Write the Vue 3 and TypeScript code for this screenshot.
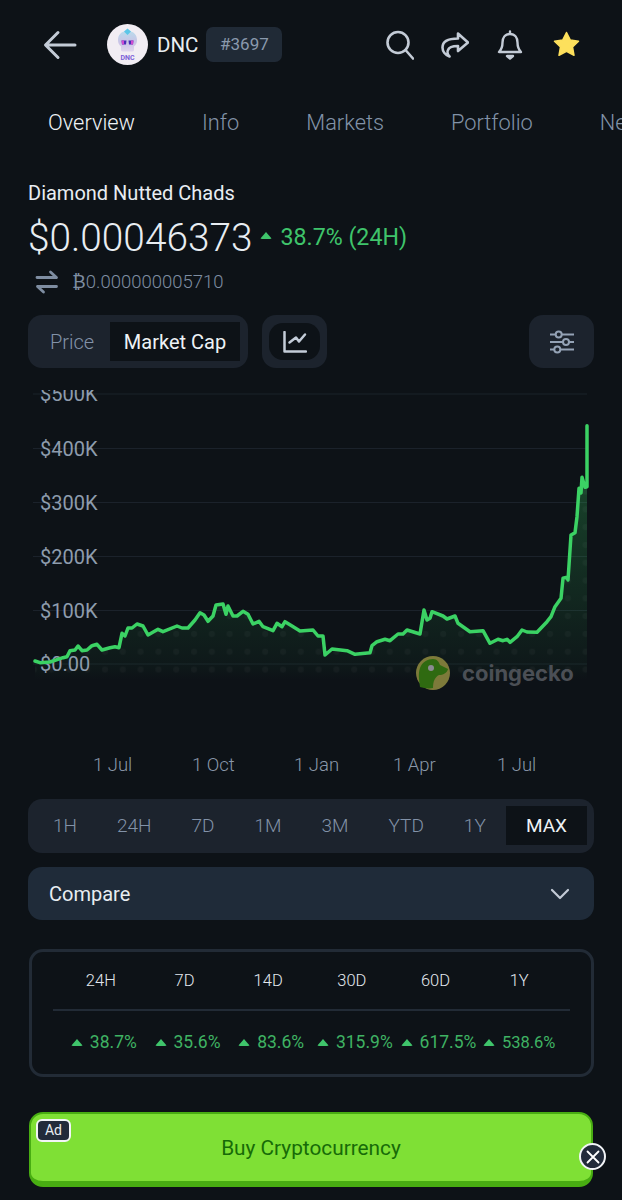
<template>
  <div class="page">
    <header class="topbar">
      <svg class="back" width="34" height="30" viewBox="0 0 34 30" fill="none">
        <path d="M32 15H3M15 2.500 2.500 15 15 27.500" stroke="#c3cbd6" stroke-width="3" stroke-linecap="round" stroke-linejoin="round" />
      </svg>
      <svg class="coin-logo" width="41" height="41" viewBox="0 0 41 41">
        <defs>
          <linearGradient id="skull" x1="0" y1="0" x2="0" y2="1">
            <stop offset="0" stop-color="#b9dcec" />
            <stop offset="0.55" stop-color="#c9c3e6" />
            <stop offset="1" stop-color="#e0d6ee" />
          </linearGradient>
        </defs>
        <circle cx="20.500" cy="20.500" r="20.500" fill="#f1edf3" />
        <path d="M20.500 7c6.500 0 9.500 4 9.500 9 0 3-1 5-3 6.500V26c0 1-1 1.500-2 1.500h-9c-1 0-2-.5-2-1.500v-3.500C12 21 11 19 11 16c0-5 3-9 9.500-9Z" fill="url(#skull)" />
        <path d="M14.500 16.500h5l-.5 4h-4ZM21.500 16.500h5l-.5 4h-4Z" fill="#4b2fb8" />
        <path d="M14.500 16.500h2.500v4h-2ZM24 16.500h2.500l-.5 4h-2Z" fill="#d04bd0" />
        <path d="M20.500 4.500 24 7.500 20.500 11 17 7.500Z" fill="#5cc6e8" />
        <text x="20.500" y="35.500" text-anchor="middle" class="logo-text">DNC</text>
      </svg>
      <span class="symbol">DNC</span>
      <span class="rank">#3697</span>
      <div class="actions">
        <svg width="28" height="30" viewBox="0 0 28 30" fill="none" stroke="#c3cbd6" stroke-width="2.600" stroke-linecap="round">
          <circle cx="12" cy="12.500" r="10.500" />
          <path d="M19.500 20 27 28.500" />
        </svg>
        <svg width="28" height="28" viewBox="0 0 28 28" fill="none" stroke="#c3cbd6" stroke-width="2.600" stroke-linejoin="round" stroke-linecap="round">
          <path d="M17 2.500 27 11.500 17 20v-5c-5 0-9 1-10 4-1 2 0 5 1.500 6.500C4 24 1.500 20 1.500 16.500 1.500 10 8 7.500 17 7.500Z" />
        </svg>
        <svg width="28" height="30" viewBox="0 0 28 30" fill="none" stroke="#c3cbd6" stroke-width="2.400" stroke-linejoin="round" stroke-linecap="round">
          <path d="M14 1.500v2.500M14 4c-5 0-7.500 4-7.500 8.500 0 4.500-1 7-3.500 9.500h22c-2.500-2.500-3.500-5-3.500-9.500C21.500 8 19 4 14 4Z" />
          <path d="M11 26h6l-3 2.500Z" fill="#c3cbd6" />
        </svg>
        <svg class="star" width="27" height="27" viewBox="0 0 27 27">
          <path d="M13.500 1.500 17.300 9l8.200 1.200-6 5.800 1.500 8.300-7.500-4-7.500 4L7.500 16l-6-5.800L9.700 9Z" fill="#fde05c" stroke="#fde05c" stroke-width="1.500" stroke-linejoin="round" />
        </svg>
      </div>
    </header>

    <nav class="tabs">
      <span v-for="(tab, i) in tabs" :key="tab" class="tab" :class="{ on: i === 0 }">{{ tab }}</span>
    </nav>

    <section class="summary">
      <div class="coin-name">Diamond Nutted Chads</div>
      <div class="price-row">
        <span class="price">$0.00046373</span>
        <span class="caret big"></span>
        <span class="change">38.7% (24H)</span>
      </div>
      <div class="btc-row">
        <svg width="24" height="24" viewBox="0 0 24 24" fill="none" stroke="#7e8da1" stroke-width="2.800" stroke-linecap="round" stroke-linejoin="round">
          <path d="M2 7.500h19M15.500 2 21.500 7.500M2.500 16.500h19M2.500 16.500 8.500 22" />
        </svg>
        <span class="btc">₿0.000000005710</span>
      </div>
    </section>

    <section class="controls">
      <div class="seg">
        <span class="seg-item">Price</span>
        <span class="seg-item on">Market Cap</span>
      </div>
      <div class="chart-btn">
        <span class="chart-btn-inner">
          <svg width="24" height="22" viewBox="0 0 24 22" fill="none" stroke="#c3ccd8" stroke-width="2.500" stroke-linecap="round" stroke-linejoin="round">
            <path d="M1.500 1V20.500H23" />
            <path d="M6.500 11.500 13 6.500 16 10.500 22 3.500" />
          </svg>
        </span>
      </div>
      <div class="settings-btn">
        <svg width="24" height="26" viewBox="0 0 24 26" fill="none" stroke="#94a2b5" stroke-width="2">
          <path d="M0 5.500h5.700M11.700 5.500H24M0 13h13M19 13h5M0 20.500h4.300M10.300 20.500H24" />
          <circle cx="8.700" cy="5.500" r="3" />
          <circle cx="16" cy="13" r="3" />
          <circle cx="7.300" cy="20.500" r="3" />
        </svg>
      </div>
    </section>

    <section class="chart">
      <svg width="622" height="300" viewBox="0 390 622 300">
        <defs>
          <linearGradient id="area" x1="0" y1="425" x2="0" y2="680" gradientUnits="userSpaceOnUse">
            <stop offset="0" stop-color="#39d565" stop-opacity="0.32" />
            <stop offset="0.6" stop-color="#39d565" stop-opacity="0.13" />
            <stop offset="0.95" stop-color="#39d565" stop-opacity="0.03" />
            <stop offset="1" stop-color="#39d565" stop-opacity="0" />
          </linearGradient>
          <pattern id="dots" x="7" y="2" width="17.800" height="17.800" patternUnits="userSpaceOnUse">
            <circle cx="9" cy="9" r="3" fill="#ffffff" fill-opacity="0.03" />
          </pattern>
        </defs>
        <line v-for="y in gridY" :key="y" x1="33" x2="587" :y1="y" :y2="y" stroke="#1b222b" stroke-width="1" />
        <path :d="areaPath" fill="url(#area)" />
        <path :d="areaPath" fill="url(#dots)" />
        <text v-for="(label, i) in yLabels" :key="label" x="40" :y="gridY[i] + 7" class="axis">{{ label }}</text>
        <path :d="linePath" fill="none" stroke="#3bd264" stroke-width="3.500" stroke-linejoin="round" stroke-linecap="round" />
        <circle cx="433" cy="673" r="17" fill="#7d7a3a" />
        <path d="M420 687c-1-8-2-13 0-19 2-6 8-9 13-9 4 0 6 3 7 6l8 4c-1 4-5 6-9 6-4 2-6 6-6 13-5 1-9 0-13-1Z" fill="#2f6a11" />
        <circle cx="431" cy="668" r="3" fill="#8b8b92" />
        <text x="462" y="681" class="gecko">coingecko</text>
      </svg>
    </section>

    <div class="dates">
      <span v-for="d in dates" :key="d.x + d.label" class="date" :style="{ left: d.x + 'px' }">{{ d.label }}</span>
    </div>

    <div class="ranges">
      <span v-for="r in ranges" :key="r" class="range" :class="{ on: r === 'MAX' }">{{ r }}</span>
    </div>

    <div class="compare">
      <span>Compare</span>
      <svg width="20" height="12" viewBox="0 0 20 12" fill="none" stroke="#c3cbd6" stroke-width="2.200" stroke-linecap="round" stroke-linejoin="round">
        <path d="M2 2l8 8 8-8" />
      </svg>
    </div>

    <div class="perf">
      <div class="perf-head">
        <span v-for="p in perf" :key="p.label">{{ p.label }}</span>
      </div>
      <div class="perf-body">
        <span v-for="p in perf" :key="p.label" class="perf-val">
          <i class="caret"></i>{{ p.value }}
        </span>
      </div>
    </div>

    <div class="ad">
      <span class="ad-tag">Ad</span>
      <span class="ad-text">Buy Cryptocurrency</span>
      <span class="ad-close">
        <svg width="14" height="14" viewBox="0 0 14 14" fill="none" stroke="#fff" stroke-width="1.800" stroke-linecap="round">
          <path d="M1.500 1.500l11 11M12.500 1.500l-11 11" />
        </svg>
      </span>
    </div>
  </div>
</template>

<script setup lang="ts">
const tabs = ['Overview', 'Info', 'Markets', 'Portfolio', 'News']

const gridY = [394, 448.5, 502.5, 556.5, 610.5, 664]
const yLabels = ['$500K', '$400K', '$300K', '$200K', '$100K', '$0.00']

const dates = [
  { label: '1 Jul', x: 93 },
  { label: '1 Oct', x: 192 },
  { label: '1 Jan', x: 294 },
  { label: '1 Apr', x: 393 },
  { label: '1 Jul', x: 497 },
]

const ranges = ['1H', '24H', '7D', '1M', '3M', 'YTD', '1Y', 'MAX']

const perf = [
  { label: '24H', value: '38.7%' },
  { label: '7D', value: '35.6%' },
  { label: '14D', value: '83.6%' },
  { label: '30D', value: '315.9%' },
  { label: '60D', value: '617.5%' },
  { label: '1Y', value: '538.6%' },
]

// traced from the market cap line, x y pairs in page pixels
const points: [number, number][] = [
  [35, 661], [40, 662.7], [50, 662], [63, 657.7], [67, 656.7], [70, 650.7], [75, 650], [78, 646],
  [82, 650.7], [87, 650], [92, 645.7], [97, 644.3], [102, 650], [110, 647.7], [115, 646.7], [119, 647.7],
  [122, 633.3], [125, 636], [128, 628], [132, 628], [137, 624], [143, 626], [148, 635], [158, 629.3],
  [163, 631.7], [177, 626], [182, 628], [188, 628], [195, 620], [200, 612.7], [204, 615], [208, 621.3],
  [213, 616], [216, 605], [223, 604], [226, 614.3], [228, 606], [233, 616], [237, 616], [243, 611.3],
  [248, 614.3], [253, 624], [259, 621.3], [263, 626.7], [273, 630.7], [277, 623.3], [282, 626.7], [285, 621.7],
  [292, 626], [300, 631], [313, 630], [318, 636], [323, 636], [325, 655], [332, 649], [347, 650.7],
  [355, 654.3], [370, 652.7], [372, 645.7], [377, 641.7], [385, 639.3], [390, 640.7], [398, 634], [403, 634],
  [407, 630], [420, 634], [424, 610], [427, 620], [430, 618.3], [432, 611.7], [443, 616], [447, 619],
  [455, 616], [458, 623.3], [470, 631.7], [483, 630.7], [490, 643.3], [498, 639.3], [503, 640.7], [507, 639.3],
  [510, 642.3], [517, 636.7], [522, 630], [527, 632], [537, 632.3], [547, 621.7], [551, 616.7], [555, 606.7],
  [561, 598.3], [563, 578.3], [567, 577.3], [568, 580], [571, 535], [575, 532.7], [577, 516.7], [579, 488.3],
  [581, 493], [582, 477.3], [585, 487.3], [587, 486.7], [587, 425.7],
]

const linePath = 'M' + points.map((p) => p.join(' ')).join('L')
const areaPath = linePath + 'L587 680L35 680Z'
</script>

<style>
html,
body {
  background: #0d1217;
}
</style>

<style scoped>
.page {
  width: 622px;
  height: 1200px;
  overflow: hidden;
  background: #0d1217;
  font-family: Roboto, "Liberation Sans", sans-serif;
  color: #e8edf2;
  box-sizing: border-box;
}

.topbar {
  display: flex;
  align-items: center;
  height: 41px;
  padding: 24px 42px 0 43px;
}

.back {
  margin-right: 30px;
}

.logo-text {
  font-family: Roboto, sans-serif;
  font-size: 7px;
  font-weight: 700;
  fill: #7a5fd8;
}

.symbol {
  margin-left: 9px;
  font-size: 20.500px;
}

.rank {
  margin-left: 8px;
  width: 76px;
  height: 35px;
  line-height: 35px;
  text-align: center;
  border-radius: 7px;
  background: #202a36;
  color: #8a99ad;
  font-size: 17px;
}

.actions {
  margin-left: auto;
  display: flex;
  align-items: center;
  gap: 27px;
}

.star {
  margin-left: 2px;
}

.tabs {
  display: flex;
  gap: 67px;
  margin-top: 43px;
  padding-left: 48px;
  white-space: nowrap;
  overflow: hidden;
}

.tab {
  font-size: 21.800px;
  font-weight: 300;
  line-height: 30px;
  color: #8292a8;
}

.tab.on {
  color: #eef2f6;
}

.summary {
  padding: 0 28px;
  margin-top: 42px;
}

.coin-name {
  font-size: 20px;
  line-height: 26px;
}

.price-row {
  display: flex;
  align-items: center;
  margin-top: 9px;
  height: 44px;
}

.price {
  font-size: 38.800px;
  font-weight: 300;
}

.caret {
  display: inline-block;
  width: 0;
  height: 0;
  border-left: 6.500px solid transparent;
  border-right: 6.500px solid transparent;
  border-bottom: 7px solid #3fc46b;
  border-radius: 2px;
  margin-right: 7px;
}

.caret.big {
  margin-left: 8px;
  margin-right: 8px;
  margin-bottom: 3px;
}

.change {
  font-size: 23.200px;
  color: #3fc46b;
}

.btc-row {
  display: flex;
  align-items: center;
  gap: 13px;
  margin-top: 11px;
  padding-left: 7px;
  height: 24px;
}

.btc {
  font-size: 18.500px;
  font-weight: 300;
  color: #7e8da1;
}

.controls {
  display: flex;
  gap: 14px;
  margin-top: 21px;
  padding: 0 28px;
}

.seg {
  display: flex;
  width: 220px;
  height: 53px;
  box-sizing: border-box;
  padding: 7px 8px 7px 0;
  border-radius: 14px;
  background: #1c232d;
}

.seg-item {
  display: flex;
  align-items: center;
  justify-content: center;
  width: 82px;
  box-sizing: border-box;
  padding-left: 6px;
  font-size: 20px;
  font-weight: 300;
  color: #8292a8;
}

.seg-item.on {
  width: 130px;
  padding-left: 0;
  font-weight: 400;
  background: #0d1217;
  color: #eef2f6;
}

.chart-btn,
.settings-btn {
  display: flex;
  align-items: center;
  justify-content: center;
  width: 65px;
  height: 53px;
  border-radius: 14px;
  background: #1c232d;
}

.settings-btn {
  margin-left: auto;
}

.chart-btn-inner {
  display: flex;
  align-items: center;
  justify-content: center;
  width: 51px;
  height: 37px;
  border-radius: 14px;
  background: #0d1217;
}

.chart {
  height: 300px;
  margin-top: 22px;
}

.chart svg {
  display: block;
}

.axis {
  font-family: Roboto, sans-serif;
  font-size: 20px;
  font-weight: 400;
  fill: #8e9cad;
}

.gecko {
  font-family: Inter, sans-serif;
  font-size: 22px;
  font-weight: 700;
  fill: #4b4f55;
}

.dates {
  position: relative;
  height: 26px;
  margin-top: 62px;
}

.date {
  position: absolute;
  top: 0;
  line-height: 26px;
  font-size: 18.500px;
  font-weight: 300;
  color: #8a98aa;
}

.ranges {
  display: flex;
  margin: 21px 28px 0;
  height: 54px;
  box-sizing: border-box;
  padding: 7px 7px 8px 5px;
  border-radius: 14px;
  background: #1c232d;
}

.range {
  display: flex;
  align-items: center;
  padding: 0 20px;
  font-size: 19px;
  font-weight: 300;
  color: #8292a8;
}

.range.on {
  margin-left: auto;
  background: #0d1217;
  color: #eef2f6;
  font-weight: 400;
}

.compare {
  display: flex;
  align-items: center;
  justify-content: space-between;
  height: 53px;
  margin: 14px 28px 0;
  padding: 0 24px 0 21px;
  border-radius: 14px;
  background: #1f2b39;
  font-size: 20px;
}

.perf {
  margin: 29px 28px 0 29px;
  height: 128px;
  box-sizing: border-box;
  border: 3px solid #222b36;
  border-radius: 14px;
  padding: 0 21px;
}

.perf-head,
.perf-body {
  display: grid;
  grid-template-columns: repeat(6, 1fr);
  justify-items: center;
}

.perf-head {
  height: 59px;
  padding: 17px 9px 0 6px;
  box-sizing: border-box;
  font-size: 16.500px;
  font-weight: 300;
  line-height: 24px;
  border-bottom: 2px solid #222b36;
  color: #e3e8ee;
}

.perf-body {
  padding: 21px 6px 0 9px;
}

.perf-val {
  display: flex;
  align-items: center;
  font-size: 17.500px;
  color: #3fb263;
  white-space: nowrap;
}

.perf-val:last-child {
  font-size: 16.500px;
  margin-left: -6px;
}

.ad {
  position: relative;
  display: flex;
  align-items: center;
  justify-content: center;
  height: 75px;
  margin: 35px 29px 0;
  box-sizing: border-box;
  border: 2px solid #48ad12;
  border-bottom-width: 6px;
  border-radius: 14px;
  background: #7fe035;
}

.ad-text {
  font-size: 20.800px;
  color: #176b08;
}

.ad-tag {
  position: absolute;
  left: 5px;
  top: 5px;
  width: 35px;
  height: 23px;
  box-sizing: border-box;
  line-height: 19px;
  text-align: center;
  border: 2px solid #f2f4f7;
  border-radius: 6px;
  background: #222b3a;
  color: #e8edf2;
  font-size: 14px;
}

.ad-close {
  position: absolute;
  right: -15px;
  top: 29px;
  display: flex;
  align-items: center;
  justify-content: center;
  width: 27px;
  height: 27px;
  box-sizing: border-box;
  border: 2px solid #f2f4f7;
  border-radius: 50%;
  background: #222b3a;
}
</style>
